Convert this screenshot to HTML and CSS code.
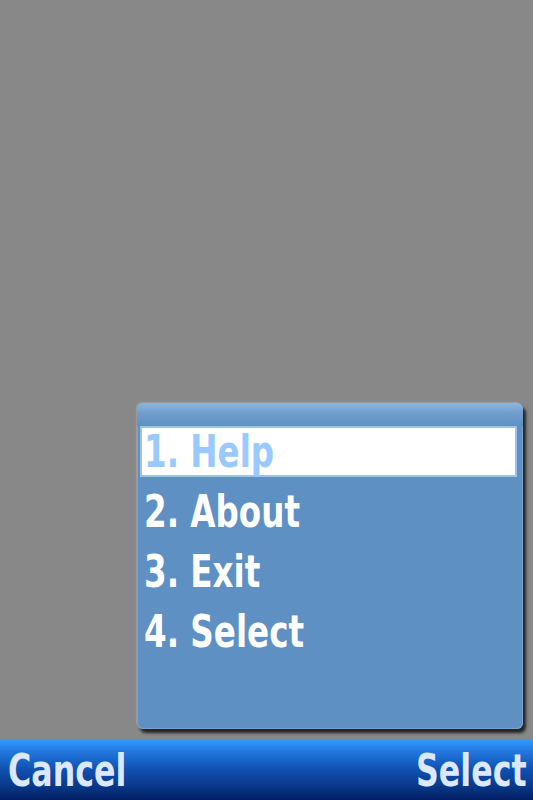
FILE: index.html
```html
<!DOCTYPE html>
<html lang="en">
<head>
  <meta charset="UTF-8">
  <title>Options menu</title>
  <link rel="stylesheet" href="styles.css">
</head>
<body>
  <div class="screen">
    <div class="canvas">
      <!-- Options popup -->
      <div class="menu">
        <div class="menu-head"></div>
        <ul class="menu-list">
          <li class="item selected"><span class="label">1. Help</span></li>
          <li class="item"><span class="label">2. About</span></li>
          <li class="item"><span class="label">3. Exit</span></li>
          <li class="item"><span class="label">4. Select</span></li>
        </ul>
      </div>
    </div>

    <!-- Softkeys -->
    <div class="softkeys">
      <span class="softkey left">Cancel</span>
      <span class="softkey right">Select</span>
    </div>
  </div>
</body>
</html>
```

FILE: styles.css
```css
body {
  margin: 0;
  background: #888888;
  font-family: "DejaVu Sans", "Liberation Sans", sans-serif;
  font-weight: bold;
}

.screen {
  width: 533px;
  height: 800px;
  display: flex;
  flex-direction: column;
  overflow: hidden;
}

.canvas {
  flex: 1;
  display: flex;
  justify-content: flex-end;
  align-items: flex-end;
  padding: 0 10px 11px 0;
}

.menu {
  width: 386px;
  height: 326px;
  background: #5e90c4;
  border-radius: 6px;
  box-shadow: 3px 4px 3px rgba(25, 25, 25, 0.9), -1px -1px 1px rgba(170, 170, 170, 0.6), inset 0 0 0 1px #7ba4d0;
  display: flex;
  flex-direction: column;
}

.menu-head {
  height: 23px;
  border-radius: 6px 6px 0 0;
  background: linear-gradient(to bottom, #8fb5dc 0%, #6f9dcc 45%, #5e90c4 100%);
}

.menu-list {
  list-style: none;
  margin: 0;
  padding: 0 6px 0 3px;
  display: flex;
  flex-direction: column;
  gap: 9px;
}

.item {
  height: 51px;
  display: flex;
  align-items: center;
  padding-left: 4px;
  font-size: 44px;
  color: #ffffff;
  box-sizing: border-box;
}

.item.selected {
  background: #ffffff;
  border: 2px solid #9cc2ea;
  padding-left: 2px;
  color: #99c9ff;
}

.label {
  display: inline-block;
  transform: scaleX(0.74);
  transform-origin: left center;
  white-space: nowrap;
}

.softkeys {
  height: 60px;
  display: flex;
  justify-content: space-between;
  align-items: center;
  padding: 0 6px 0 8px;
  background: linear-gradient(to bottom, #3399ff 0%, #2277dd 20%, #0f4fb0 50%, #0a3a8c 75%, #011f63 100%);
  font-size: 44px;
  color: #dce8ff;
}

.softkey {
  display: inline-block;
  transform: scaleX(0.72);
  white-space: nowrap;
}

.softkey.left {
  transform-origin: left center;
}

.softkey.right {
  transform-origin: right center;
}
```
